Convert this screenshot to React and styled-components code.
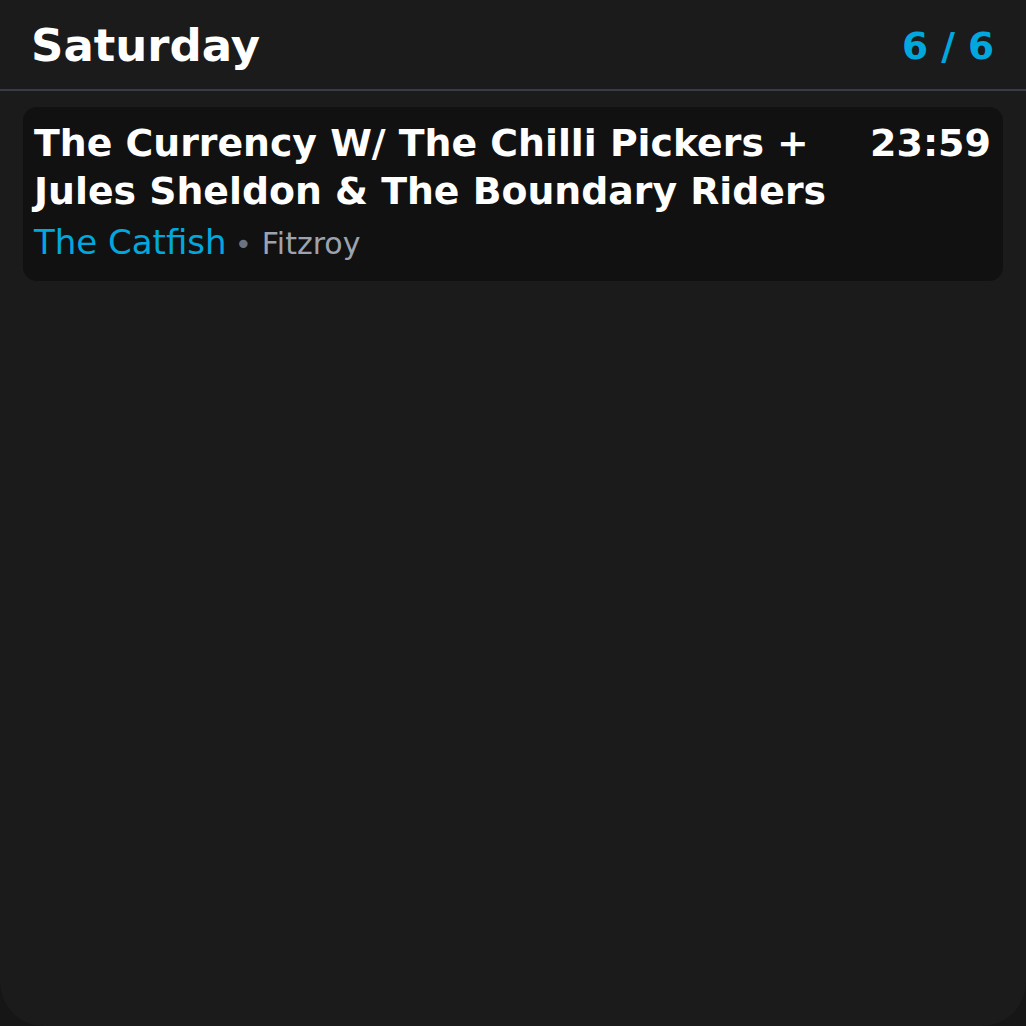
import React from "react";
import styled, { createGlobalStyle } from "styled-components";

const GlobalStyle = createGlobalStyle`
    html, body {
        margin: 0;
        padding: 0;
        background: #161616;
        font-family: "DejaVu Sans", "Noto Sans", sans-serif;
    }
    * {
        box-sizing: border-box;
    }
`;

const gigs = [
    {
        id: 1,
        title: "The Currency W/ The Chilli Pickers + Jules Sheldon & The Boundary Riders",
        time: "23:59",
        venue: "The Catfish",
        suburb: "Fitzroy",
    },
];

const Screen = styled.div`
    min-height: 100vh;
    background: #1b1b1b;
    border-radius: 0 0 44px 44px;
    display: flex;
    flex-direction: column;
`;

const Header = styled.header`
    display: flex;
    align-items: center;
    justify-content: space-between;
    height: 91px;
    padding: 2px 32px 0 31px;
    border-bottom: 2px solid #373c46;
`;

const DayTitle = styled.h1`
    margin: 0;
    font-size: 45px;
    font-weight: 700;
    color: #ffffff;
`;

const Counter = styled.span`
    font-size: 37.5px;
    font-weight: 700;
    color: #00a8de;
`;

const List = styled.div`
    display: flex;
    flex-direction: column;
    gap: 12px;
    padding: 16px 23px;
`;

const Card = styled.div`
    background: #111111;
    border-radius: 14px;
    padding: 12px 12px 15px 11px;
    display: flex;
    flex-direction: column;
    gap: 5px;
`;

const TopRow = styled.div`
    display: flex;
    justify-content: space-between;
    align-items: flex-start;
    gap: 30px;
`;

const GigTitle = styled.div`
    font-size: 37.8px;
    line-height: 48px;
    font-weight: 700;
    color: #ffffff;
    max-width: 820px;
`;

const Time = styled.div`
    font-size: 38px;
    line-height: 48px;
    font-weight: 700;
    color: #ffffff;
    white-space: nowrap;
`;

const VenueRow = styled.div`
    display: flex;
    align-items: baseline;
    gap: 8px;
    line-height: 44px;
`;

const Venue = styled.span`
    font-size: 34px;
    color: #00a8de;
`;

const Dot = styled.span`
    font-size: 29px;
    color: #6b7280;
    margin-right: 2px;
`;

const Suburb = styled.span`
    font-size: 30px;
    color: #9ca3af;
`;

function GigCard({ gig }) {
    return (
        <Card>
            <TopRow>
                <GigTitle>{gig.title}</GigTitle>
                <Time>{gig.time}</Time>
            </TopRow>
            <VenueRow>
                <Venue>{gig.venue}</Venue>
                <Dot>•</Dot>
                <Suburb>{gig.suburb}</Suburb>
            </VenueRow>
        </Card>
    );
}

export default function App() {
    return (
        <>
            <GlobalStyle />
            <Screen>
                <Header>
                    <DayTitle>Saturday</DayTitle>
                    <Counter>6 / 6</Counter>
                </Header>
                <List>
                    {gigs.map((gig) => (
                        <GigCard gig={gig} key={gig.id} />
                    ))}
                </List>
            </Screen>
        </>
    );
}
